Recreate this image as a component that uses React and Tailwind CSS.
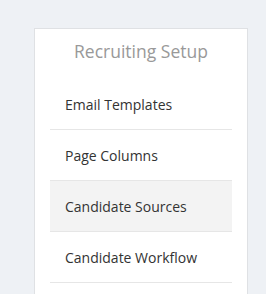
export default function App() {
  const items = [
    { label: "Email Templates", active: false },
    { label: "Page Columns", active: false },
    { label: "Candidate Sources", active: true },
    { label: "Candidate Workflow", active: false },
  ];
  return (
    <div
      className="min-h-[294px] w-[266px] bg-[#eef1f5] pl-[34px] pt-[28px]"
      style={{ fontFamily: '"Open Sans", "Noto Sans", sans-serif' }}
    >
      <div className="w-[214px] border border-[#dfe1e4] bg-white px-[15px] pb-[40px]">
        <div className="h-[50px] pt-[9px] text-center text-[17.5px] leading-[27px] text-[#999999]">
          Recruiting Setup
        </div>
        <ul>
          {items.map((it) => (
            <li
              key={it.label}
              className={
                "flex h-[51px] items-center border-b border-[#e6e6e6] pl-[15px] pt-[1px] text-[14px] leading-[20px] text-[#333333] " +
                (it.active ? "bg-[#f3f3f3]" : "")
              }
            >
              {it.label}
            </li>
          ))}
        </ul>
      </div>
    </div>
  );
}
